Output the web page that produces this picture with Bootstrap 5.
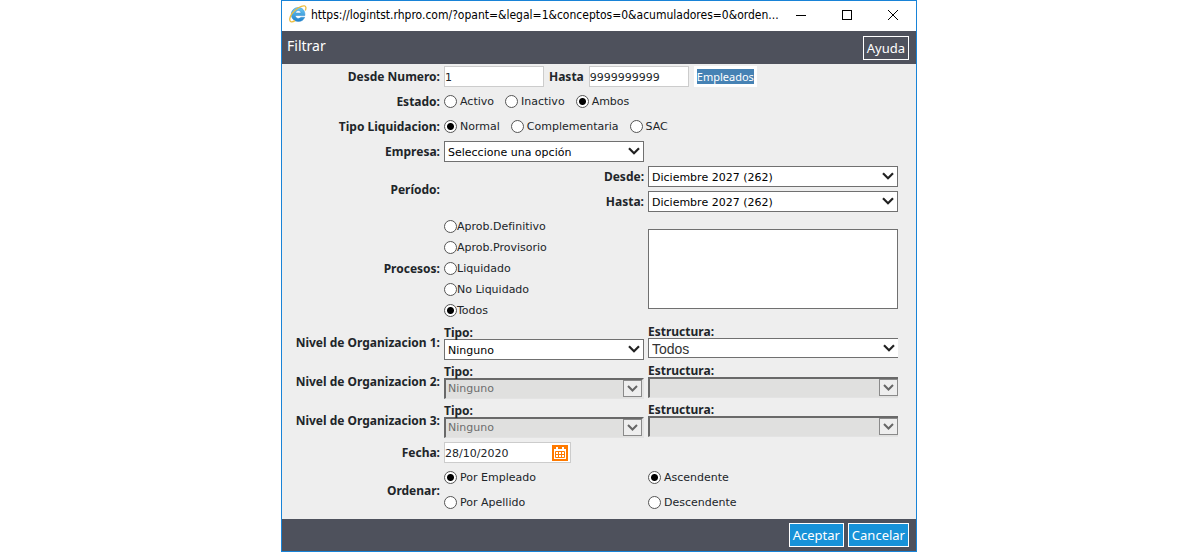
<!DOCTYPE html>
<html lang="es">
<head>
<meta charset="utf-8">
<meta name="viewport" content="width=device-width, initial-scale=1">
<title>Filtrar</title>
<link href="https://cdn.jsdelivr.net/npm/bootstrap@5.3.0/dist/css/bootstrap.min.css" rel="stylesheet">
<style>
  body { font: 11px/13px "DejaVu Sans", Verdana, sans-serif; color: #212529; background: #fff; padding-right: 2px; }
  .app-window { max-width: 636px; border: 1px solid #1883d7; background: #eee; }
  .title-bar { height: 30px; background: #fff; color: #000; font: 12px/28px "DejaVu Sans Condensed", "Segoe UI", sans-serif; padding-left: 7px; }
  .title-bar .win-btn { width: 46px; height: 28px; border: 0; background: none; padding: 0; line-height: 0; flex: none; }
  .title-bar .address { min-width: 0; }
  .tool-bar { background: #4e515c; min-height: 33px; padding: 0 7px 0 5px; font-family: "Noto Sans", sans-serif; color: #fff; }
  .tool-bar h1 { font-size: 14px; line-height: 30px; font-weight: 400; }
  footer.tool-bar { min-height: 32px; }
  .bar-btn { height: 24px; border: 1px solid #fff; border-radius: 0; padding: 0 3px; font: 13px/22px "Noto Sans", sans-serif; color: #fff; background: transparent; }
  .bar-btn.solid { background: #1792d8; }

  .form-line { display: grid; grid-template-columns: 158px minmax(0, 200px) minmax(0, 250px); column-gap: 4px; min-height: 25px; align-items: center; }
  .wide { grid-column: 2 / 4; }
  .caption { font: bold 12px/13px "Noto Sans", Tahoma, sans-serif; text-align: right; }
  .caption.start { display: block; text-align: left; }
  .slot { height: 25px; display: flex; align-items: center; justify-content: flex-end; }
  .roomy { padding: 2px 0; }
  .level { min-height: 39px; align-items: start; }
  .level > .caption { align-self: center; }
  .level > .kind { padding-top: 3px; }
  .level > .structure { padding-top: 2px; }

  .box { height: 21px; border: 1px solid #ccc; border-radius: 0; background: #fff; padding: 1px 0 0; font: inherit; color: #212529; }
  input.box { width: 100px; }
  .range { gap: 5px; }
  .pick { appearance: none; display: block; width: 100%; height: 21px; border: 1px solid #707070; border-radius: 0; padding: 2px 24px 0 3px; font: inherit; color: #000;
    background: #fff url("data:image/svg+xml,%3Csvg xmlns='http://www.w3.org/2000/svg' width='12' height='8'%3E%3Cpath d='M1 1.2 6 6.2 11 1.2' fill='none' stroke='%23222' stroke-width='2.2'/%3E%3C/svg%3E") no-repeat right 3px top 5px; }
  .pick.flush { height: 20px; border-right: 0; font-family: "Liberation Sans", Arial, sans-serif; font-size: 14px; color: #333; }
  .pick:disabled { opacity: 1; color: #6d6d6d; border: solid; border-width: 2px 0 1px 2px; border-color: #696969 #e3e3e3 #e3e3e3 #696969; padding: 0 24px 1px 2px;
    background: #e0e0df url("data:image/svg+xml,%3Csvg xmlns='http://www.w3.org/2000/svg' width='19' height='17'%3E%3Crect x='.5' y='.5' width='18' height='16' fill='%23eee' stroke='%238a8a8a'/%3E%3Cpath d='M5 6 9.500 10.500 14 6' fill='none' stroke='%23666' stroke-width='2'/%3E%3C/svg%3E") no-repeat right 0 top 0; }
  .pick.sunk:disabled { border-right-width: 2px; }
  .process-list { display: block; width: 100%; height: 80px; border: 1px solid #707070; border-radius: 0; background: #fff; resize: none; }

  .choices { display: flex; gap: 11px; }
  .choice { display: flex; align-items: center; gap: 3px; }
  .choice.tight { gap: 0; height: 21px; }
  .choice.tall { height: 25px; }
  .choice input { appearance: none; flex: none; width: 13px; height: 13px; margin: 0; border: 1px solid #555; border-radius: 50%; background: #fff; }
  .choice input:checked { background: radial-gradient(circle, #000 3px, #fff 4px); }
  .choice span { padding-bottom: 1px; }

  .link-box { background: #fff; padding: 3px; height: 21px; }
  .link-box a { display: block; background: #4682b4; color: #fff; font: 11px/15px "Noto Sans", sans-serif; text-decoration: none; }
  .date-box { width: 127px; padding: 0 2px 0 0; }
  .date-box input { border: 0; outline: 0; padding: 1px 0 0; width: 100px; font: inherit; color: inherit; }
  .date-box button { border: 0; padding: 0; background: none; line-height: 0; }
</style>
</head>
<body>
<main class="app-window mx-auto">
  <div class="title-bar d-flex align-items-start">
    <svg class="flex-shrink-0 mt-1" width="18" height="18" viewBox="0 0 18 18" aria-hidden="true">
      <defs><linearGradient id="blue" x1="0" y1="0" x2="0" y2="1"><stop offset="0" stop-color="#6ccbf5"/><stop offset="1" stop-color="#1f7fca"/></linearGradient></defs>
      <path d="M9.300 2.500C5.200 2.500 2.300 5.600 2.300 9.500s3 7 7 7c3.100 0 5.400-1.500 6.400-4.300h-3.900c-.5.800-1.300 1.200-2.400 1.200-1.800 0-2.900-1.100-3-2.900h9.500c.3-4.700-2.400-8-6.600-8zM6.500 8C6.700 6.500 7.800 5.600 9.300 5.600S11.900 6.500 12 8z" fill="url(#blue)" stroke="#2c8bce" stroke-width=".5"/>
      <path d="M16.300 5.500c1-2.400.8-4.300-.8-4.600C12.500.3 6.500 4 3 8.700c-2.500 3.400-3 7-1.200 7.900 1 .5 2.600.1 4.200-1" fill="none" stroke="#edbd3f" stroke-width="1.300"/>
    </svg>
    <span class="address text-nowrap flex-grow-1 ms-1">https://logintst.rhpro.com/?opant=&amp;legal=1&amp;conceptos=0&amp;acumuladores=0&amp;orden...</span>
    <button class="win-btn" type="button" aria-label="Minimizar"><svg width="10" height="10"><path d="M0 5.500h10" stroke="#000"/></svg></button>
    <button class="win-btn" type="button" aria-label="Maximizar"><svg width="10" height="10"><rect x=".5" y=".5" width="9" height="9" fill="none" stroke="#000"/></svg></button>
    <button class="win-btn" type="button" aria-label="Cerrar"><svg width="10" height="10"><path d="M0 0 10 10M10 0 0 10" stroke="#000"/></svg></button>
  </div>

  <header class="tool-bar d-flex justify-content-between align-items-center">
    <h1 class="m-0 align-self-start">Filtrar</h1>
    <button class="bar-btn" type="button">Ayuda</button>
  </header>

  <form>
    <div class="form-line">
      <label class="caption" for="desde">Desde Numero:</label>
      <div class="wide range d-flex align-items-center">
        <input class="box" id="desde" type="text" value="1">
        <label class="caption" for="hasta">Hasta</label>
        <input class="box" id="hasta" type="text" value="9999999999">
        <div class="link-box"><a href="#">Empleados</a></div>
      </div>
    </div>

    <div class="form-line" role="radiogroup" aria-labelledby="l-estado">
      <span class="caption" id="l-estado">Estado:</span>
      <div class="wide choices">
        <label class="choice"><input type="radio" name="estado"><span>Activo</span></label>
        <label class="choice"><input type="radio" name="estado"><span>Inactivo</span></label>
        <label class="choice"><input type="radio" name="estado" checked><span>Ambos</span></label>
      </div>
    </div>

    <div class="form-line" role="radiogroup" aria-labelledby="l-tipo">
      <span class="caption" id="l-tipo">Tipo Liquidacion:</span>
      <div class="wide choices">
        <label class="choice"><input type="radio" name="liq" checked><span>Normal</span></label>
        <label class="choice"><input type="radio" name="liq"><span>Complementaria</span></label>
        <label class="choice"><input type="radio" name="liq"><span>SAC</span></label>
      </div>
    </div>

    <div class="form-line">
      <label class="caption" for="empresa">Empresa:</label>
      <select class="pick" id="empresa"><option>Seleccione una opción</option></select>
    </div>

    <div class="form-line" role="group" aria-labelledby="l-periodo">
      <span class="caption" id="l-periodo">Período:</span>
      <div>
        <div class="slot"><label class="caption" for="p-desde">Desde:</label></div>
        <div class="slot"><label class="caption" for="p-hasta">Hasta:</label></div>
      </div>
      <div>
        <div class="slot"><select class="pick" id="p-desde"><option>Diciembre 2027 (262)</option></select></div>
        <div class="slot"><select class="pick" id="p-hasta"><option>Diciembre 2027 (262)</option></select></div>
      </div>
    </div>

    <div class="form-line roomy" role="radiogroup" aria-labelledby="l-proc">
      <span class="caption" id="l-proc">Procesos:</span>
      <div>
        <label class="choice tight"><input type="radio" name="proc"><span>Aprob.Definitivo</span></label>
        <label class="choice tight"><input type="radio" name="proc"><span>Aprob.Provisorio</span></label>
        <label class="choice tight"><input type="radio" name="proc"><span>Liquidado</span></label>
        <label class="choice tight"><input type="radio" name="proc"><span>No Liquidado</span></label>
        <label class="choice tight"><input type="radio" name="proc" checked><span>Todos</span></label>
      </div>
      <textarea class="process-list" aria-label="Lista de procesos"></textarea>
    </div>

    <div class="form-line level" role="group" aria-labelledby="l-n1">
      <span class="caption" id="l-n1">Nivel de Organizacion 1:</span>
      <div class="kind"><label class="caption start" for="t1">Tipo:</label><select class="pick" id="t1"><option>Ninguno</option></select></div>
      <div class="structure"><label class="caption start" for="e1">Estructura:</label><select class="pick flush" id="e1"><option>Todos</option></select></div>
    </div>
    <div class="form-line level" role="group" aria-labelledby="l-n2">
      <span class="caption" id="l-n2">Nivel de Organizacion 2:</span>
      <div class="kind"><label class="caption start" for="t2">Tipo:</label><select class="pick sunk" id="t2" disabled><option>Ninguno</option></select></div>
      <div class="structure"><label class="caption start" for="e2">Estructura:</label><select class="pick" id="e2" disabled><option></option></select></div>
    </div>
    <div class="form-line level" role="group" aria-labelledby="l-n3">
      <span class="caption" id="l-n3">Nivel de Organizacion 3:</span>
      <div class="kind"><label class="caption start" for="t3">Tipo:</label><select class="pick sunk" id="t3" disabled><option>Ninguno</option></select></div>
      <div class="structure"><label class="caption start" for="e3">Estructura:</label><select class="pick" id="e3" disabled><option></option></select></div>
    </div>

    <div class="form-line">
      <label class="caption" for="fecha">Fecha:</label>
      <div class="box date-box d-flex align-items-center justify-content-between">
        <input id="fecha" type="text" value="28/10/2020">
        <button type="button" aria-label="Calendario">
          <svg width="16" height="16" viewBox="0 0 16 16"><rect width="16" height="16" fill="#ff7a00"/><path fill="#fff" d="M2 4h12v10H2zM4 2h2v2H4zM10 2h2v2h-2z"/><path fill="none" stroke="#ff7a00" d="M3.500 6.500h9v6h-9zM3.500 9.500h9M6.500 6.500v6M9.500 6.500v6"/></svg>
        </button>
      </div>
    </div>

    <div class="form-line pb-1">
      <span class="caption" id="l-ord">Ordenar:</span>
      <div role="radiogroup" aria-labelledby="l-ord">
        <label class="choice tall"><input type="radio" name="ord" checked><span>Por Empleado</span></label>
        <label class="choice tall"><input type="radio" name="ord"><span>Por Apellido</span></label>
      </div>
      <div role="radiogroup" aria-label="Sentido">
        <label class="choice tall"><input type="radio" name="dir" checked><span>Ascendente</span></label>
        <label class="choice tall"><input type="radio" name="dir"><span>Descendente</span></label>
      </div>
    </div>

    <footer class="tool-bar d-flex justify-content-end align-items-center gap-1">
      <button class="bar-btn solid" type="button">Aceptar</button>
      <button class="bar-btn solid" type="button">Cancelar</button>
    </footer>
  </form>
</main>
<script src="https://cdn.jsdelivr.net/npm/bootstrap@5.3.0/dist/js/bootstrap.bundle.min.js"></script>
</body>
</html>
